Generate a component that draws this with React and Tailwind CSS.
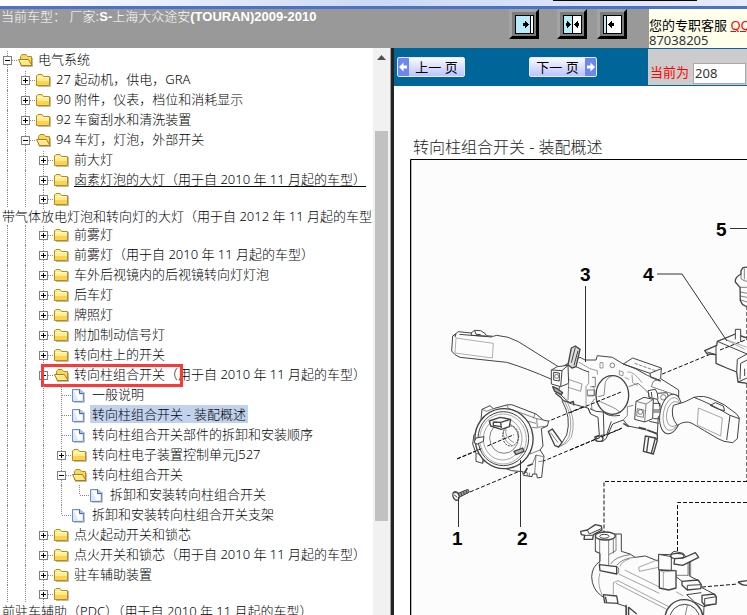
import { useState } from 'react'
import clsx from 'clsx'

// one entry per visible row, depth = number of guide columns in front of it
const ROWS = [
  { depth: 0, icon: 'open', text: '电气系统' },
  { depth: 1, icon: 'folder', text: '27 起动机，供电，GRA' },
  { depth: 1, icon: 'folder', text: '90 附件，仪表，档位和消耗显示' },
  { depth: 1, icon: 'folder', text: '92 车窗刮水和清洗装置' },
  { depth: 1, icon: 'open', text: '94 车灯，灯泡，外部开关' },
  { depth: 2, icon: 'folder', text: '前大灯' },
  { depth: 2, icon: 'folder', text: '卤素灯泡的大灯（用于自 2010 年 11 月起的车型）', hover: true },
  { depth: 2, icon: 'folder', text: '带气体放电灯泡和转向灯的大灯（用于自 2012 年 11 月起的车型）', wrap: true },
  { depth: 2, icon: 'folder', text: '前雾灯' },
  { depth: 2, icon: 'folder', text: '前雾灯（用于自 2010 年 11 月起的车型）' },
  { depth: 2, icon: 'folder', text: '车外后视镜内的后视镜转向灯灯泡' },
  { depth: 2, icon: 'folder', text: '后车灯' },
  { depth: 2, icon: 'folder', text: '牌照灯' },
  { depth: 2, icon: 'folder', text: '附加制动信号灯' },
  { depth: 2, icon: 'folder', text: '转向柱上的开关' },
  { depth: 2, icon: 'open', text: '转向柱组合开关（用于自 2010 年 11 月起的车型）', marked: true },
  { depth: 3, icon: 'page', text: '一般说明' },
  { depth: 3, icon: 'page', text: '转向柱组合开关 - 装配概述' },
  { depth: 3, icon: 'page', text: '转向柱组合开关部件的拆卸和安装顺序' },
  { depth: 3, icon: 'folder', text: '转向柱电子装置控制单元J527' },
  { depth: 3, icon: 'open', text: '转向柱组合开关' },
  { depth: 4, icon: 'page', text: '拆卸和安装转向柱组合开关', last: true },
  { depth: 3, icon: 'page', text: '拆卸和安装转向柱组合开关支架', last: true },
  { depth: 2, icon: 'folder', text: '点火起动开关和锁芯' },
  { depth: 2, icon: 'folder', text: '点火开关和锁芯（用于自 2010 年 11 月起的车型）' },
  { depth: 2, icon: 'folder', text: '驻车辅助装置' },
  { depth: 2, icon: 'folder', text: '前驻车辅助（PDC）（用于自 2010 年 11 月起的车型）', wrap: true },
]

function Expander({ open }) {
  return (
    <svg width="18" height="20" viewBox="0 0 18 20" shapeRendering="crispEdges" fill="none">
      <path d="M7.5 1V6M7.5 15V20M12 10.5H18" stroke="#888" strokeDasharray="1 1" />
      <rect x="3.5" y="6.5" width="8" height="8" fill="#fff" stroke="#808080" />
      <path d={open ? 'M5 10.5H10' : 'M5 10.5H10M7.5 8V13'} stroke="#000" />
    </svg>
  )
}

function Elbow({ last }) {
  return (
    <svg width="18" height="20" viewBox="0 0 18 20" shapeRendering="crispEdges" className="shrink-0" aria-hidden="true">
      <path d={last ? 'M7.5 0V10M8 10.5H18' : 'M7.5 0V20M8 10.5H18'} fill="none" stroke="#888" strokeDasharray="1 1" />
    </svg>
  )
}

function NodeIcon({ icon }) {
  if (icon === 'page') {
    return (
      <svg width="16" height="16" viewBox="0 0 16 16" className="shrink-0" aria-hidden="true">
        <path d="M2 15.5H12.5V5" fill="none" stroke="#c8c8c8" />
        <path d="M.5 2.5H8L11.5 6V14.5H.5Z" fill="#dce8ff" stroke="#6d8cd0" />
        <path d="M2 4H7V8H10V13H6Z" fill="#fff" />
        <path d="M7.5 2.5V6.5H11.5" fill="#a9c2f5" stroke="#4565b5" />
      </svg>
    )
  }
  if (icon === 'open') {
    return (
      <svg width="16" height="16" viewBox="0 0 16 16" className="shrink-0" aria-hidden="true">
        <path d="M3 14.5H14.5V6" fill="none" stroke="#bbb" />
        <path d="M2.5 8V4.5L4 2.5H8L9.5 4.5H13.5V13.5H3Z" fill="#f8d95e" stroke="#b98a1c" />
        <path d="M.5 7.5H10.5L14 13.5H3.5Z" fill="#ffe785" stroke="#b07c12" />
        <path d="M2 8.5H10" stroke="#fffbd0" />
      </svg>
    )
  }
  return (
    <svg width="16" height="16" viewBox="0 0 16 16" className="shrink-0" aria-hidden="true">
      <path d="M2 14.5H14.5V5" fill="none" stroke="#bbb" />
      <path d="M.5 4L2 2.5H6L7.5 4.5H13.5V13.5H.5Z" fill="#ffec8c" stroke="#b98a1c" />
      <path d="M1 9H13V13H1Z" fill="#fbd350" />
      <path d="M1 5.5H13" stroke="#fffbd8" />
    </svg>
  )
}

function TreeRow({ row, selected, onSelect }) {
  const label = (
    <a
      href="#"
      onClick={(e) => {
        e.preventDefault()
        onSelect(row.text)
      }}
      className={clsx('px-0.5', row.hover && 'underline underline-offset-2', selected && 'bg-[#c1d2ee]')}
    >
      {row.text}
    </a>
  )

  return (
    <li>
      <div className={clsx('relative flex items-center', row.wrap ? 'h-[17px]' : 'h-5')}>
        {Array.from({ length: row.depth }, (_, i) => (
          <span key={i} className="ml-[7px] w-[11px] shrink-0 self-stretch border-l border-dotted border-[#888]" />
        ))}
        {row.icon === 'page' ? (
          <Elbow last={row.last} />
        ) : (
          <button type="button" aria-label={row.text} className="shrink-0">
            <Expander open={row.icon === 'open'} />
          </button>
        )}
        <NodeIcon icon={row.icon} />
        {!row.wrap && <span className="ml-0.5 self-start leading-[18px]">{label}</span>}
        {row.marked && (
          <span className="absolute -top-px left-[41px] h-[23px] w-[142px] border-3 border-[#fd3838]" />
        )}
      </div>
      {row.wrap && <div className="h-[18px] leading-[18px]">{label}</div>}
    </li>
  )
}

const PANE_ICONS = {
  left: (
    <>
      <path d="M1 1H15V18H1Z" fill="#b9ebfb" />
      <path d="M15.500 1V18" stroke="#000" />
      <path d="M8 8H10V5L14 9.500L10 14V11H8Z" fill="#000" />
    </>
  ),
  both: (
    <>
      <path d="M1 1H9V18H1Z" fill="#b9ebfb" />
      <path d="M9.500 1V18" stroke="#000" />
      <path d="M3 8H4V5L8 9.500L4 14V11H3ZM16 8H15V5L11 9.500L15 14V11H16Z" fill="#000" />
    </>
  ),
  right: (
    <>
      <path d="M1 1H3V18H1Z" fill="#b9ebfb" />
      <path d="M3.500 1V18" stroke="#000" />
      <path d="M11 8H9V5L5 9.500L9 14V11H11Z" fill="#000" />
    </>
  ),
}

function PaneButton({ kind, label, className }) {
  return (
    <button
      type="button"
      aria-label={label}
      className={clsx(
        'flex h-[30px] w-[30px] items-center justify-center border-3 border-t-[#a3a3a3] border-l-[#a3a3a3] border-r-black border-b-black bg-[#7d7d7d]',
        className,
      )}
    >
      <svg width="19" height="19" viewBox="0 0 19 19" shapeRendering="crispEdges">
        <rect x=".5" y=".5" width="18" height="18" fill="#fff" stroke="#000" />
        {PANE_ICONS[kind]}
      </svg>
    </button>
  )
}

function PageArrow({ flip }) {
  return (
    <svg width="11" height="18" viewBox="0 0 11 18" className={clsx('shrink-0', flip && 'rotate-180')} aria-hidden="true">
      <path d="M0 0H11V18H0Z" fill="#6f86ee" />
      <path d="M1 9L5.500 4.500V7.500H9V10.500H5.500V13.500Z" fill="#fff" />
    </svg>
  )
}

function PageButton({ next, children }) {
  return (
    <button
      type="button"
      className="flex h-5 w-[68px] items-center overflow-hidden rounded-[2px] border border-[#e8e8ff] bg-linear-to-b from-[#fafaff] to-[#bcc4fb] text-[13px] text-black"
    >
      {!next && <PageArrow />}
      <span className="flex-1 text-center leading-[18px]">{children}</span>
      {next && <PageArrow flip />}
    </button>
  )
}

// parts are drawn at three times their size
function Part({ x, y, children }) {
  return <g transform={`translate(${x} ${y}) scale(${1 / 3})`}>{children}</g>
}

function AssemblyDrawing() {
  return (
    <svg
      width="337"
      height="456"
      viewBox="410 159 337 456"
      className="block shrink-0 bg-[#fcfcfc]"
      role="img"
      aria-label="转向柱组合开关 - 装配概述"
      fill="none"
      stroke="#444"
      strokeWidth="3"
      strokeLinejoin="round"
    >
      <path d="M747 159.500H410.500V615" stroke="#000" strokeWidth="1" />
      <path d="M411.500 160V615" stroke="#bbb" strokeWidth="1" />

      {/* centre lines */}
      <g stroke="#111" strokeWidth="1" strokeDasharray="4 2">
        <path d="M457 459L747 339" />
        <path d="M470 492L622 428" />
        <path d="M747 481.500H604V534" />
        <path d="M747 502.500H677.500V556" />
        <path d="M702 587L738 584" />
      </g>
      <path d="M746.500 306V481" stroke="#777" strokeWidth="1" strokeDasharray="4 2" />

      {/* left stalk */}
      <Part x={400} y={200}>
        <path
          fill="#fcfcfc"
          d="M166 402L175 395L213 399L224 391L242 392L256 401L258 407L280 409L290 406Q325 408 355 425L475 500L455 538Q380 505 320 487L180 472L165 464L155 453L158 408Z"
        />
        <path d="M168 402L165 412M178 403L276 411M214 399V406L256 408M224 392L228 403L242 404M158 408L168 402" />
        <path d="M168 414L280 430L277 474L165 459Z" stroke="#888" strokeWidth="2" />
      </Part>

      {/* clock spring */}
      <Part x={440} y={340}>
        <path
          fill="#fcfcfc"
          d="M122 250L126 208L150 197L160 206L200 195L215 194L288 222L310 240L326 244L322 258L304 266L309 318L300 330L312 348L305 412L292 414L290 402L278 402L276 410L250 406L248 395L215 392L130 362L128 370L108 364L108 340L98 312L102 284L114 276Z"
        />
        <path d="M126 208L140 214L160 206M200 195L205 205L290 236L310 240M290 236L292 262L322 258M285 222L280 235M250 240L288 250M264 250L270 342L300 330M276 262L292 264M108 340L128 345V370M288 345L310 350M276 375L288 345L284 402M250 395L262 398V408M268 398V410M295 365L312 362" strokeWidth="2" />
        <ellipse cx="192" cy="296" rx="87" ry="90" fill="#fcfcfc" strokeWidth="4" transform="rotate(-8 192 296)" />
        <ellipse cx="190" cy="296" rx="76" ry="81" />
        <ellipse cx="189" cy="297" rx="70" ry="75" stroke="#888" strokeWidth="2" />
        <ellipse cx="188" cy="297" rx="58" ry="63" stroke="#777" strokeWidth="2" />
        <ellipse cx="192" cy="294" rx="43" ry="46" strokeWidth="2" />
        <ellipse cx="212" cy="288" rx="24" ry="30" strokeWidth="3" strokeDasharray="6 3" />
        <path d="M190 270Q186 300 215 316M198 265Q192 292 222 308" stroke="#666" strokeWidth="2" />
        <path d="M148 243L180 232L212 238L208 260L184 268L152 258Z" fill="#fcfcfc" strokeWidth="4" />
        <path d="M160 246L182 247L184 264M182 247L212 238M160 246V256L182 260" strokeWidth="4" />
        <path d="M102 308L108 294L132 290L130 304L112 312Z" fill="#fcfcfc" />
        <path d="M222 334L248 324L252 334L228 344Z" fill="#bbb" strokeWidth="4" />
        <path d="M52 356L124 326M142 318L222 284" stroke="#111" strokeDasharray="12 5" />
        <path d="M262 384L252 402M262 378L278 372" strokeWidth="5" />
      </Part>

      {/* ribbon cable and its plug */}
      <Part x={440} y={340}>
        <path d="M366 182Q395 232 380 285Q368 310 352 320" />
        <path d="M374 184Q402 236 388 288Q374 314 358 320M382 186Q410 240 394 292Q380 314 362 318" stroke="#777" strokeWidth="2" />
        <path d="M325 275L337 267L366 308L356 321L345 317Z" fill="#fcfcfc" strokeWidth="4" />
        <path d="M332 278L354 308" strokeWidth="2" />
      </Part>

      {/* switch housing */}
      <Part x={570} y={340}>
        <path
          fill="#fcfcfc"
          d="M-20 78L30 52L45 60L78 60L82 47L127 52L160 72L188 54L274 84L272 116L326 150V172L300 200L265 230L262 280L230 270L175 258L160 240L128 252L108 296L98 304L76 302L74 290L88 286L84 232L62 222L54 204L0 190L-35 158Z"
        />
        <path d="M160 72L240 100L274 86M240 100L242 112L272 124M160 72L196 86L232 106L272 122" />
        <path d="M194 70L256 92" strokeDasharray="10 4" strokeWidth="2" />
        <path d="M26 66L60 86L82 92V104M56 92V130L48 140V200M60 140H72V168H52M-5 118L36 132L32 154L-5 142M90 68H99V84H90ZM148 92L160 96L158 108L148 104Z" stroke="#666" strokeWidth="2" />
        <circle cx="127" cy="76" r="7" strokeWidth="2" />
        <path d="M52 150H74V166H52ZM66 112H76V140H66M74 176L64 190L66 210M102 160L106 124L116 110M160 240L172 226V200L190 196M176 140L204 130Q228 150 236 160V172" strokeWidth="2" />
        <path d="M172 96Q190 92 216 128M186 104L188 128L204 136M164 112L178 118" stroke="#777" strokeWidth="2" />
        <ellipse cx="127" cy="165" rx="49" ry="58" fill="#fcfcfc" strokeWidth="4" />
        <path d="M84 170L102 166L106 126Q112 112 126 108M84 182L120 198Q138 205 152 218" stroke="#555" strokeWidth="2" />
        <path d="M60 206L78 214L100 216Q116 232 150 226M100 216L102 288M92 286L110 284L124 244M54 204L62 222" strokeWidth="3" />
        <ellipse cx="88" cy="296" rx="11" ry="8" fill="#fcfcfc" strokeWidth="4" />
        <path d="M198 184L222 172L250 178L248 236L224 246L194 238Z" fill="#fcfcfc" />
        <path d="M198 184L228 192L250 178M228 192L224 246M202 206L222 210L220 232L200 228Z" strokeWidth="2" />
        <circle cx="211" cy="216" r="7" strokeWidth="2" />
        <path d="M234 152L256 148L262 160L290 158L296 170M234 152L238 172L262 178L270 200M244 156L246 172M262 160L264 178M250 190H270V210H250M250 216H272V236H250M238 244L266 250" strokeWidth="3" />
        <circle cx="280" cy="172" r="8" strokeWidth="2" />
        <path d="M272 116L250 124L244 140L326 168" strokeWidth="2" />
        <path d="M0 218L156 155M0 330L156 265" stroke="#111" strokeDasharray="12 5" />
        <path d="M160 250L176 260M206 262L228 268M232 270L262 282" strokeWidth="5" />
      </Part>

      {/* left switch block */}
      <Part x={440} y={340}>
        <path d="M334 90L352 80L384 76L386 130L362 140L334 132Z" fill="#fcfcfc" />
        <path d="M334 90L366 92L384 76M366 92L362 140M341 97L358 99V123L341 120Z" strokeWidth="3" />
        <circle cx="350" cy="109" r="6" strokeWidth="2" />
        <path d="M384 74L394 24L406 18L420 28L408 80L396 84Z" fill="#ddd" strokeWidth="4" />
        <path d="M394 68L406 22M402 76L414 32M408 80L430 90L446 96" strokeWidth="3" />
        <path d="M338 140L352 146L368 158L364 164L344 154Z" fill="#aaa" strokeWidth="4" />
        <path d="M346 160L362 172L370 182L390 188L400 184L402 196" strokeWidth="4" />
        <path d="M386 132L384 180" strokeWidth="2" />
      </Part>

      {/* right stalk, collar and lower plug */}
      <Part x={570} y={340}>
        <ellipse cx="302" cy="222" rx="32" ry="60" fill="#fcfcfc" transform="rotate(10 302 222)" />
        <ellipse cx="306" cy="222" rx="26" ry="50" stroke="#777" strokeWidth="2" transform="rotate(10 306 222)" />
        <ellipse cx="312" cy="222" rx="22" ry="38" stroke="#777" strokeWidth="2" transform="rotate(10 312 222)" />
        <path
          fill="#fcfcfc"
          d="M310 196Q346 188 372 172Q400 164 428 178L462 194L500 222L508 234L502 296L488 308L462 304L444 296Q400 270 366 250Q346 240 322 256Q300 230 310 196Z"
        />
        <path d="M372 172Q420 190 480 226L508 236M480 226L470 300M420 196L436 188L460 198L464 212L446 208L420 196" strokeWidth="3" />
        <path d="M385 204L457 234L452 288L382 255Z" stroke="#777" strokeWidth="2" />
        <path d="M226 288L256 294L262 300L250 342L220 334Z" fill="#fcfcfc" strokeWidth="4" />
        <path d="M236 292L230 336M256 294L244 340M262 282V298" strokeWidth="4" />
      </Part>

      {/* control unit */}
      <Part x={570} y={340}>
        <path d="M404 32L440 16L442 4L496 -18L531 -6L570 0V134L531 130L504 126L500 96L470 84L438 70V44L412 42Z" fill="#fcfcfc" strokeWidth="4" />
        <path d="M412 36L438 44V16M442 4L531 42M500 96L502 58L531 42M510 118L512 70L531 60M504 126L531 114M524 108V86" />
        <path d="M496 -2V-32H512V6" fill="#fcfcfc" />
        <path d="M450 30L531 -2" stroke="#111" strokeDasharray="12 5" />
        <path d="M460 -4L531 22M470 0L524 28" stroke="#888" strokeWidth="2" />
      </Part>

      {/* bolt */}
      <Part x={560} y={200}>
        <path d="M543 212L549 203L570 200V320H561L548 314L541 302L540 262L526 246Q524 232 543 222Z" fill="#fcfcfc" strokeWidth="4" />
        <path d="M543 222V236Q552 244 561 244M540 262H561M541 276L561 280M541 288L561 292M543 300L561 306M553 206V238" strokeWidth="2" />
      </Part>

      {/* screw */}
      <Part x={400} y={460}>
        <path d="M174 100L204 88L208 96L178 112Z" fill="#999" strokeWidth="3" />
        <path d="M182 97L186 108M190 94L194 105M198 91L202 101" strokeWidth="3" />
        <ellipse cx="168" cy="108" rx="9" ry="13" fill="#fcfcfc" strokeWidth="4" transform="rotate(-20 168 108)" />
        <path d="M162 104L172 112M158 98L174 98" strokeWidth="3" />
      </Part>

      {/* steering column */}
      <Part x={400} y={460}>
        <path
          fill="#fcfcfc"
          d="M586 228L640 222L664 222V274L690 282L706 292L736 288L776 304V283L810 284L822 274L850 280L868 306V348L896 362L904 382L946 404L948 430L912 440L910 480H680V440L655 432L612 412L605 408Q576 388 575 350Q576 320 600 304V280L586 274Z"
        />
        <path d="M542 214L562 210L586 194L604 198L606 210L580 224L578 238L552 238L554 226L544 224Z" fill="#fcfcfc" strokeWidth="4" />
        <path d="M562 210L568 222L604 206M554 226L578 226" />
        <ellipse cx="616" cy="228" rx="30" ry="12" fill="#fcfcfc" strokeWidth="4" />
        <ellipse cx="613" cy="229" rx="14" ry="6" />
        <path d="M599 236V318M626 238V316M640 234V280M648 222V272M586 274L599 280M626 284L648 272" strokeWidth="2" />
        <path d="M598 314L650 320V342L600 332Z" fill="#fcfcfc" strokeWidth="4" />
        <path d="M650 320L656 324V338L650 342M632 312Q645 290 690 284M650 316Q668 294 706 292" strokeWidth="2" />
        <path d="M600 338Q590 370 606 404M640 404V368L654 362L806 440M648 370L800 448M674 330L780 382M656 342L778 400M828 395L850 408M716 322L776 298M716 322L718 334L776 322M690 296Q664 304 660 320" stroke="#777" strokeWidth="2" />
        <path d="M776 283L814 290V330M776 283V330L814 334" fill="#fcfcfc" strokeWidth="3" />
        <path d="M778 330L828 332V384L806 390L778 384Z" fill="#fcfcfc" strokeWidth="4" />
        <path d="M778 330L790 336L828 332M790 336V388" stroke="#777" strokeWidth="2" />
        <ellipse cx="832" cy="288" rx="20" ry="8" strokeWidth="4" />
        <path d="M824 296L822 312L848 316L896 292L886 278L850 294Z" fill="#fcfcfc" strokeWidth="4" />
        <path d="M864 308V346L828 346M872 304V350" strokeWidth="2" />
        <path d="M846 364L894 360L904 374L902 386L862 390L846 376Z" fill="#fcfcfc" strokeWidth="4" />
        <path d="M862 390V376L904 374M828 350L846 364" strokeWidth="3" />
        <path d="M906 406L942 402L949 410L948 432L914 436L906 426Z" fill="#fcfcfc" strokeWidth="4" />
        <path d="M914 436V416L949 410M860 404L904 398M860 404L884 426L912 440" strokeWidth="3" />
        <path d="M610 404L650 408L654 430L614 428Z" fill="#fcfcfc" strokeWidth="4" />
        <path d="M616 410L620 428M678 434V470M686 470V442L710 462" strokeWidth="4" />
        <circle cx="852" cy="476" r="57" fill="#fcfcfc" strokeWidth="4" />
        <circle cx="854" cy="478" r="45" strokeWidth="3" />
        <path d="M862 436L856 465" strokeWidth="2" />
        <path d="M1014 366L1041 362M1014 366Q1024 376 1041 376" strokeWidth="4" />
      </Part>

      {/* leader lines */}
      <g stroke="#333" strokeWidth="1">
        <path d="M458.500 497V527M520.500 460V527M585.500 286V362M657 274H682L727 341M730 228.500H747" />
      </g>

      <g fill="#000" stroke="none" className="font-['Liberation_Sans',sans-serif] text-[19px] font-bold">
        <text x="452" y="545">1</text>
        <text x="517" y="545">2</text>
        <text x="580" y="281">3</text>
        <text x="643" y="281">4</text>
        <text x="716" y="236">5</text>
      </g>
    </svg>
  )
}

export default function App() {
  const [selected, setSelected] = useState('转向柱组合开关 - 装配概述')
  const [page, setPage] = useState('208')

  return (
    <div className="flex h-screen flex-col overflow-hidden bg-white font-['Noto_Sans','Noto_Sans_CJK_SC',sans-serif] text-[13px] text-[#333]">
      <div className="flex h-[9px] shrink-0 justify-end border-b-3 border-[#4a72c8] bg-linear-to-r from-white via-[#cdd9f5] to-[#e6ecfb]">
        <span className="mr-[50px] h-px w-36 bg-black" />
      </div>

      <header className="flex h-[39px] shrink-0 bg-[#999]">
        <h1 className="flex-1 whitespace-nowrap pl-px font-['Liberation_Sans','Noto_Sans_CJK_SC',sans-serif] leading-4 font-light text-white">
          当前车型： 厂家:<b className="font-bold">S-</b>上海大众途安<b className="font-bold">(TOURAN)2009-2010</b>
        </h1>
        <div className="mr-[22px] flex items-start gap-2.5">
          <PaneButton kind="left" label="展开目录" className="mr-2" />
          <PaneButton kind="both" label="恢复" />
          <PaneButton kind="right" label="隐藏目录" />
        </div>
        <div className="w-[98px] overflow-hidden whitespace-nowrap bg-[#ffffec] pt-[9px] leading-[15px]">
          <div>
            <span className="text-black">您的专职客服</span>{' '}
            <a href="#" className="text-[#f00] underline">
              QQ
            </a>
          </div>
          <div>87038205</div>
        </div>
      </header>

      <div className="flex min-h-0 flex-1">
        <nav className="min-w-0 basis-[373px] overflow-hidden pt-0.5 font-light text-black">
          <ul className="whitespace-nowrap">
            {ROWS.map((row, i) => (
              <TreeRow key={i} row={row} selected={row.text === selected} onSelect={setSelected} />
            ))}
          </ul>
        </nav>

        <div className="flex w-[17px] shrink-0 flex-col items-center bg-[#f1f1f1]">
          <svg width="9" height="5" viewBox="0 0 9 5" className="mt-[7px] shrink-0" aria-hidden="true">
            <path d="M0 5L4.500 0L9 5Z" fill="#505050" />
          </svg>
          <div className="mt-[71px] h-[390px] w-[13px] bg-[#c1c1c1]" />
        </div>
        <div className="w-1 shrink-0 border-l border-[#a0a0a0] bg-[#222]" />

        <main className="flex min-w-0 flex-1 flex-col overflow-hidden">
          <div className="flex h-[38px] shrink-0 bg-[#069]">
            <div className="flex flex-1 items-center gap-16 pl-[3px]">
              <PageButton>上一 页</PageButton>
              <PageButton next>下一 页</PageButton>
            </div>
            <label className="my-px flex w-[99px] shrink-0 items-center gap-1 whitespace-nowrap bg-[#ccc] pt-3 pl-0.5 text-[#f00]">
              当前为
              <input
                value={page}
                onChange={(e) => setPage(e.target.value)}
                className="h-[21px] w-[53px] shrink-0 border border-[#a9a9a9] bg-white px-px text-[#333]"
              />
            </label>
          </div>
          <h2 className="shrink-0 whitespace-nowrap pt-[49px] pb-0 pl-[19px] text-base leading-6 font-light text-[#222]">
            转向柱组合开关 - 装配概述
          </h2>
          <div className="pl-4">
            <AssemblyDrawing />
          </div>
        </main>
      </div>
    </div>
  )
}
